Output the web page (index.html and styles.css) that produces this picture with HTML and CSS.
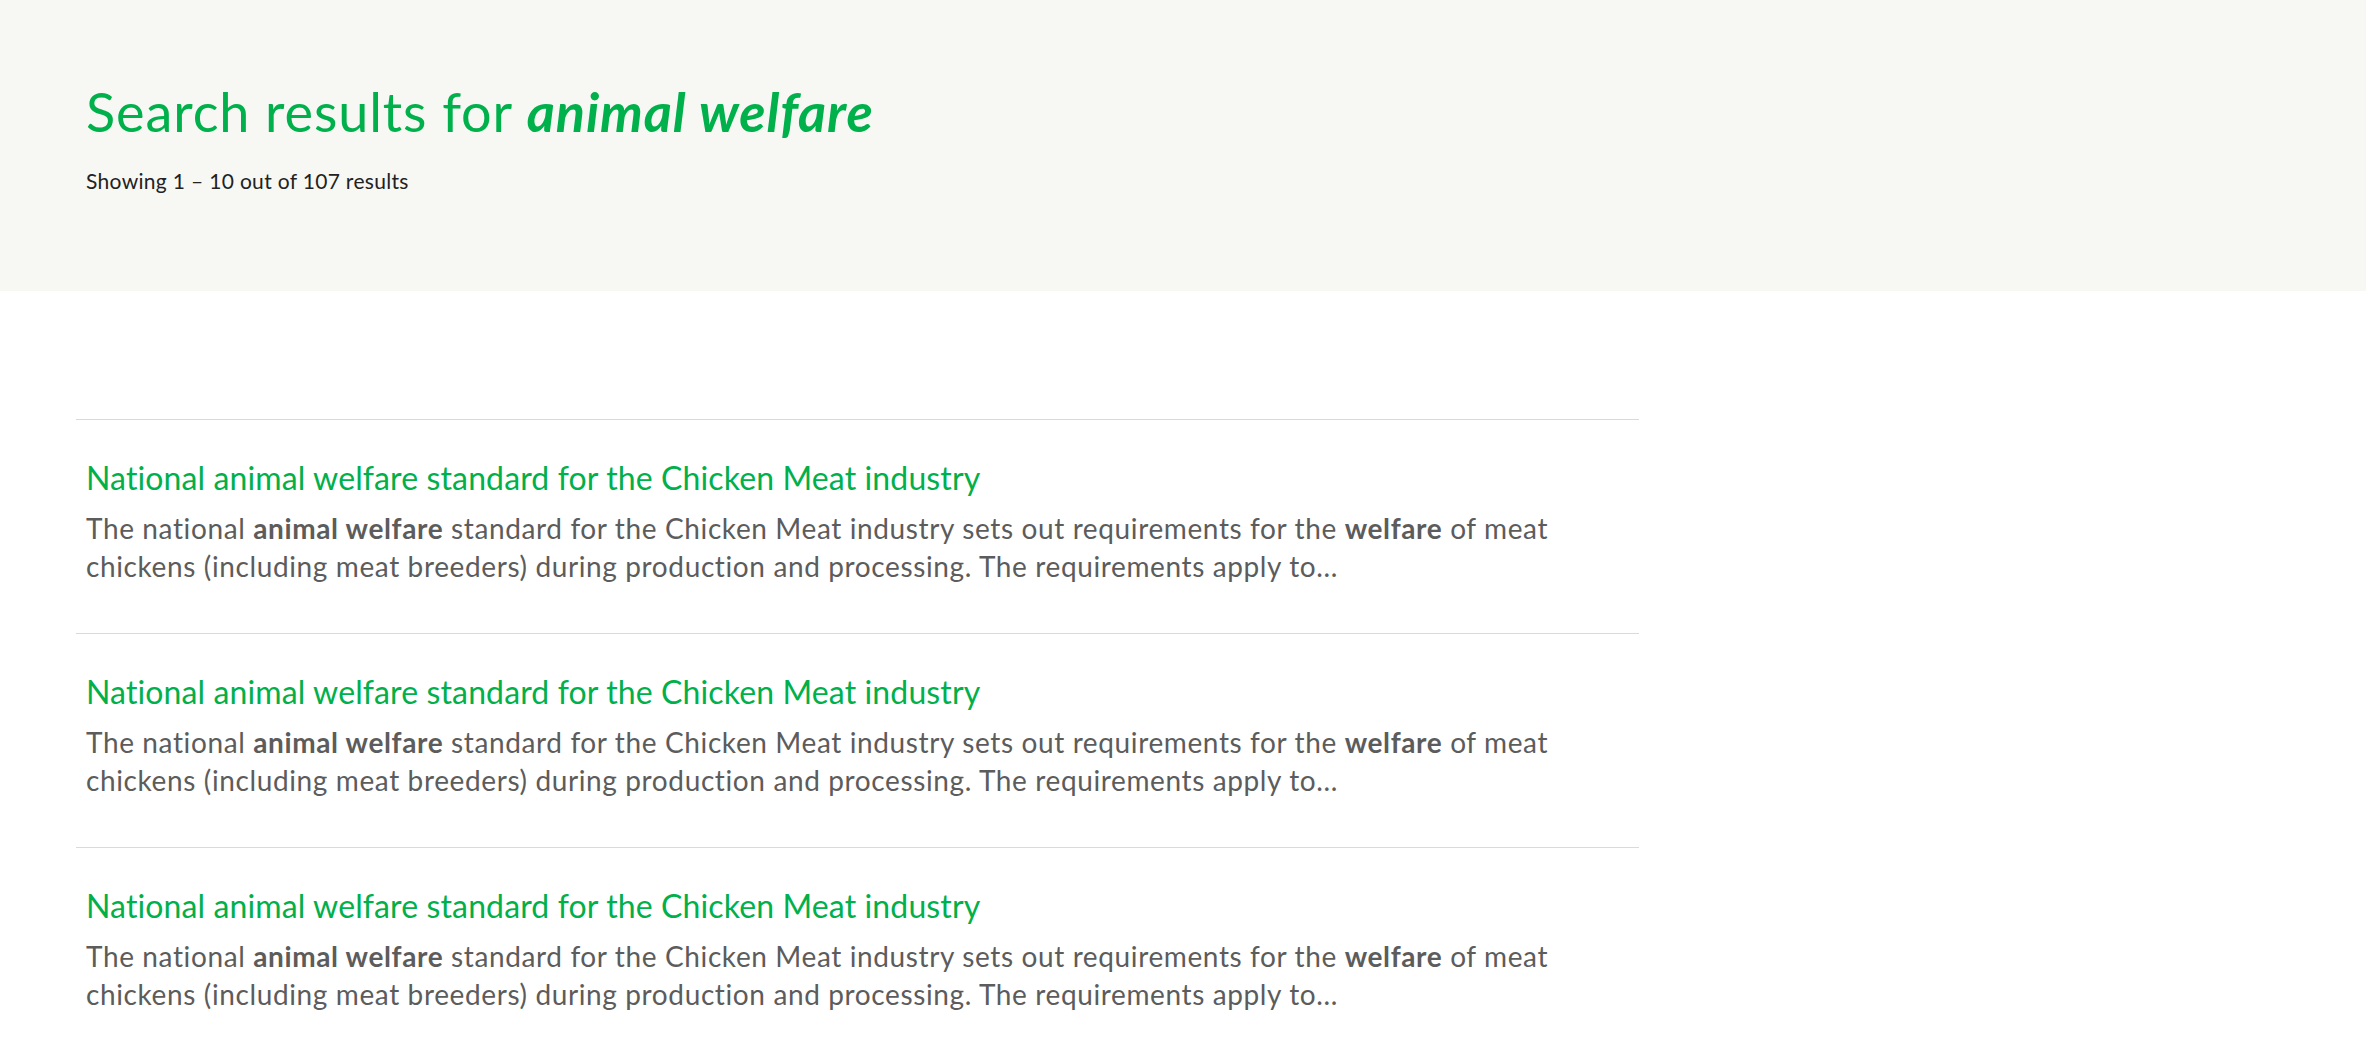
FILE: index.html
```html
<!DOCTYPE html>
<html lang="en">
<head>
<meta charset="utf-8">
<title>Search results for animal welfare</title>
<link rel="stylesheet" href="styles.css">
</head>
<body>
<header class="hero">
  <h1 class="hero-title">Search results for <em>animal welfare</em></h1>
  <p class="hero-count">Showing 1 – 10 out of 107 results</p>
</header>
<main class="results">
  <article class="result">
    <a class="result-title" href="#">National animal welfare standard for the Chicken Meat industry</a>
    <p class="result-desc">The national <strong>animal welfare</strong> standard for the Chicken Meat industry sets out requirements for the <strong>welfare</strong> of meat chickens (including meat breeders) during production and processing. The requirements apply to...</p>
  </article>
  <article class="result">
    <a class="result-title" href="#">National animal welfare standard for the Chicken Meat industry</a>
    <p class="result-desc">The national <strong>animal welfare</strong> standard for the Chicken Meat industry sets out requirements for the <strong>welfare</strong> of meat chickens (including meat breeders) during production and processing. The requirements apply to...</p>
  </article>
  <article class="result">
    <a class="result-title" href="#">National animal welfare standard for the Chicken Meat industry</a>
    <p class="result-desc">The national <strong>animal welfare</strong> standard for the Chicken Meat industry sets out requirements for the <strong>welfare</strong> of meat chickens (including meat breeders) during production and processing. The requirements apply to...</p>
  </article>
</main>
</body>
</html>
```
FILE: styles.css
```css
html, body {
  margin: 0;
  padding: 0;
  background: #ffffff;
}
body {
  font-family: Lato, "Open Sans", sans-serif;
}
.hero {
  box-sizing: border-box;
  height: 291px;
  padding: 80px 0 0 86px;
  background: #f7f7f4;
}
.hero-title {
  margin: 0;
  font-size: 54px;
  line-height: 64px;
  font-weight: 400;
  letter-spacing: 0.9px;
  color: #00b04b;
}
.hero-title em {
  font-style: italic;
  font-weight: 700;
}
.hero-count {
  margin: 23px 0 0;
  font-size: 21px;
  line-height: 28px;
  letter-spacing: 0.32px;
  color: #222222;
}
.results {
  width: 1563px;
  margin-left: 76px;
  padding-top: 128px;
}
.result {
  border-top: 1px solid #dadada;
  padding: 38px 10px 48px;
}
.result-title {
  display: block;
  font-size: 32px;
  line-height: 40px;
  letter-spacing: 0.12px;
  color: #00b04b;
  text-decoration: none;
}
.result-desc {
  max-width: 1500px;
  margin: 11px 0 0;
  font-size: 28px;
  line-height: 38px;
  letter-spacing: 0.62px;
  color: #5c5c5c;
}
.result-desc strong {
  font-weight: 700;
}
```
